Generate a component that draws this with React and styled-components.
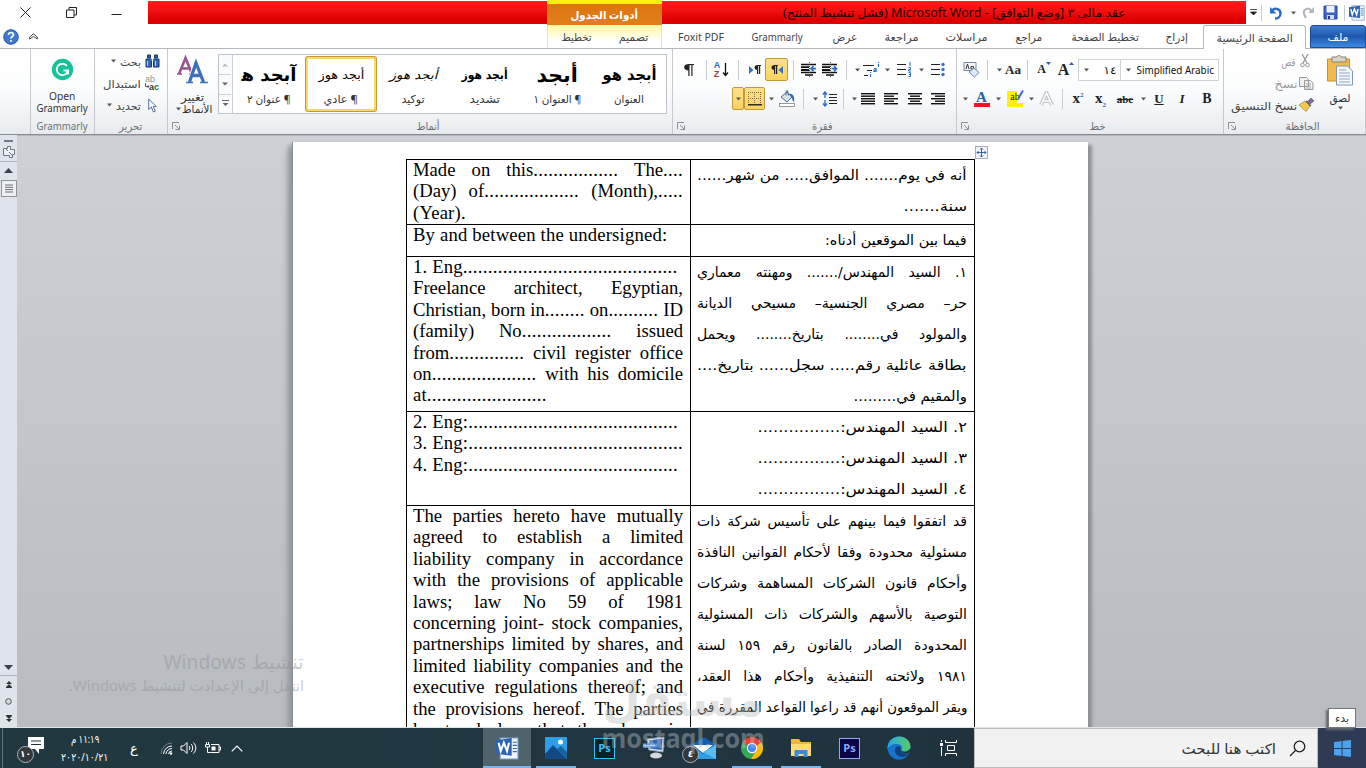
import React, { useLayoutEffect, useRef, useState } from "react";
import styled, { createGlobalStyle } from "styled-components";

const ui = `"Noto Sans", "DejaVu Sans", sans-serif`;

// Squeezes a single line of text into a known width
const FitText = ({ w, children }) => {
  const ref = useRef(null);
  const [scale, setScale] = useState(1);

  useLayoutEffect(() => {
    setScale(w / ref.current.offsetWidth);
  }, [w]);

  return (
    <FitBox $w={w}>
      <FitInner ref={ref} dir="auto" style={{ transform: `scaleX(${scale})` }}>
        {children}
      </FitInner>
    </FitBox>
  );
};

// Dot leaders are set a little wider than the words around them
const Leaders = ({ text, gap }) =>
  text
    .replace("|", "")
    .split(/(\.{3,})/)
    .map((part, i) => (i % 2 ? <Dots key={i} $gap={gap}>{part}</Dots> : part));

const Svg = ({ w = 16, h = 16, children }) => (
  <svg width={w} height={h} viewBox={`0 0 ${w} ${h}`} fill="none">
    {children}
  </svg>
);

const Lines = ({ rows }) => (
  <Svg w={14} h={13}>
    {rows.map(([x, w], i) => (
      <rect key={i} x={x} y={1 + i * 2.5} width={w} height="1.4" fill="#111" />
    ))}
  </Svg>
);

const Arrow = ({ w = 12 }) => (
  <Slot $w={w}>
    <Svg w={5} h={4}>
      <path d="M0 0.5h5L2.5 3.5z" fill="#555" />
    </Svg>
  </Slot>
);

const Launcher = () => (
  <Svg w={8} h={8}>
    <path d="M0.5 7V0.5H7M3 3l4 4M7.5 3.5v4h-4" stroke="#8a8f96" />
  </Svg>
);

const WordIcon = ({ s = 16 }) => (
  <svg width={s} height={s} viewBox="0 0 22 22">
    <path d="M4 1h17v20H4z" fill="#eef4fb" stroke="#7da2cf" />
    <path d="M16 5h4M16 8h4M16 11h4M16 14h4" stroke="#3768ac" />
    <path d="M0 3l15-2v17L0 16z" fill="#2b62b3" />
    <path d="M2.5 5.5l2 8 3-8 3 8 2-8" stroke="#fff" strokeWidth="2" fill="none" />
  </svg>
);

const Pilcrow = () => (
  <Svg w={7} h={9}>
    <path d="M3.5 0H7v1H3.5zM3.5 0v5C-.5 5-.5 0 3.5 0zM3 0h1.2v9H3zM5 0h1.2v9H5z" fill="#222" />
  </Svg>
);

const Bucket = () => (
  <Svg w={17} h={17}>
    <path d="M2 7l6-5 5 5-5 5z" fill="#dbe6f3" stroke="#456996" />
    <path d="M7 5.5V1.5l1.500-1 1 5" stroke="#456996" />
    <path d="M10 4c4-1 6 3 5 8-2-1-1-3-3-5z" fill="#376bb1" />
    <rect x=".5" y="13.5" width="15" height="3" fill="#fff" stroke="#999" />
  </Svg>
);

const Indent = ({ flip }) => (
  <Svg w={17} h={15}>
    <path d="M1 2.5h15M1 10.5h15M5 13h8" stroke="#111" strokeWidth="1.3" />
    <path d="M1 5.2h8M1 8h8" stroke="#111" strokeWidth="1.8" />
    <path d="M9.5 0v15" stroke="#444" strokeDasharray="1 1" />
    {flip ? (
      <path d="M16 6.700H12M13.500 4.200L11 6.700l2.500 2.500" stroke="#2f6fc4" strokeWidth="1.7" />
    ) : (
      <path d="M10.500 6.700h4M13 4.200l2.500 2.500L13 9.200" stroke="#2f6fc4" strokeWidth="1.7" />
    )}
  </Svg>
);

const STYLES = [
  { sample: "آبجد ﻫ", name: "¶ عنوان ٢", size: 18, sw: 55, nw: 44, bold: true },
  { sample: "أبجد هوز", name: "¶ عادي", size: 12, sw: 46, nw: 35, active: true },
  { sample: "أبجد هوز", name: "توكيد", size: 12, sw: 48, nw: 23, italic: true },
  { sample: "أبجد هوز", name: "تشديد", size: 12, sw: 46, nw: 30, bold: true },
  { sample: "أبجد", name: "¶ العنوان ١", size: 20, sw: 41, nw: 48, bold: true },
  { sample: "أبجد هو", name: "العنوان", size: 16, sw: 54, nw: 30, bold: true },
];

const TABS = [
  { w: 78, tw: 46, label: "Foxit PDF" },
  { w: 75, tw: 51, label: "Grammarly" },
  { w: 60, tw: 25, label: "عرض" },
  { w: 54, tw: 34, label: "مراجعة" },
  { w: 76, tw: 42, label: "مراسلات" },
  { w: 48, tw: 27, label: "مراجع" },
  { w: 104, tw: 67, label: "تخطيط الصفحة" },
  { w: 40, tw: 22, label: "إدراج" },
];

// a leading "|" marks a line that is not stretched to the column width
const CLAUSES = [
  {
    h: 65,
    en: [
      "Made on this................. The....",
      "(Day) of................... (Month),.....",
      "|(Year).",
    ],
    ar: ["أنه في يوم....... الموافق..... من شهر......", "|سنة......."],
    arW: [270, 64],
  },
  { h: 32, en: ["|By and between the undersigned:"], ar: ["|فيما بين الموقعين أدناه:"], arW: [142] },
  {
    h: 155,
    en: [
      "|1. Eng...........................................",
      "Freelance architect, Egyptian,",
      "Christian, born in........ on.......... ID",
      "(family) No.................. issued",
      "from............... civil register office",
      "on..................... with his domicile",
      "|at........................",
    ],
    ar: [
      "١. السيد المهندس/....... ومهنته معماري",
      "حر– مصري الجنسية– مسيحي الديانة",
      "والمولود في........ بتاريخ........ ويحمل",
      "بطاقة عائلية رقم..... سجل...... بتاريخ....",
      "|والمقيم في.........",
    ],
    arW: [0, 0, 0, 270, 114],
  },
  {
    h: 94,
    en: [
      "|2. Eng:..........................................",
      "|3. Eng:...........................................",
      "|4. Eng:..........................................",
    ],
    ar: [
      "|٢. السيد المهندس:................",
      "|٣. السيد المهندس:................",
      "|٤. السيد المهندس:................",
    ],
    arW: [209, 209, 209],
  },
  {
    h: 240,
    en: [
      "The parties hereto have mutually",
      "agreed to establish a limited",
      "liability company in accordance",
      "with the provisions of applicable",
      "laws; law No 59 of 1981",
      "concerning joint- stock companies,",
      "partnerships limited by shares, and",
      "limited liability companies and the",
      "executive regulations thereof; and",
      "the provisions hereof. The parties",
      "hereto declare that they have in",
    ],
    ar: [
      "قد اتفقوا فيما بينهم على تأسيس شركة ذات",
      "مسئولية محدودة وفقا لأحكام القوانين النافذة",
      "وأحكام قانون الشركات المساهمة وشركات",
      "التوصية بالأسهم والشركات ذات المسئولية",
      "المحدودة الصادر بالقانون رقم ١٥٩ لسنة",
      "١٩٨١ ولائحته التنفيذية وأحكام هذا العقد،",
      "ويقر الموقعون أنهم قد راعوا القواعد المقررة في",
    ],
    arW: [0, 0, 0, 0, 0, 0, 270],
  },
];

const TitleBar = () => (
  <TitleRow>
    <WindowButtons>
      <Slot $w={50}>
        <Svg w={11} h={11}><path d="M.5.5l10 10M10.5.5l-10 10" stroke="#222" /></Svg>
      </Slot>
      <Slot $w={42}>
        <Svg w={11} h={11}><path d="M.5 3h7.5v7.5H.5zM3 3V.5h7.5V8H8" stroke="#222" /></Svg>
      </Slot>
      <Slot $w={48}>
        <Svg w={11} h={11}><path d="M.5 7.5h10" stroke="#222" /></Svg>
      </Slot>
    </WindowButtons>
    <RedBar $w={399} />
    <ContextHeader>
      <FitText w={68}>أدوات الجدول</FitText>
    </ContextHeader>
    <RedBar $w={584}>
      <TitleText>
        <FitText w={343}>عقد مالي ٣ [وضع التوافق] - Microsoft Word (فشل تنشيط المنتج)</FitText>
      </TitleText>
    </RedBar>
    <Slot $w={15}>
      <Svg w={7} h={7}><path d="M0 .5h7M.5 3h6l-3 3z" stroke="#222" fill="#222" strokeWidth=".8" /></Svg>
    </Slot>
    <Divider $h={16} />
    <Slot $w={28}>
      <Svg w={14} h={14}>
        <path d="M3 4.5C6 1 12 3 11.5 8c-.3 3-3 4.5-5.5 4.5" stroke="#2b6cc8" strokeWidth="2.5" />
        <path d="M1 1v6.5h6.5z" fill="#2b6cc8" />
      </Svg>
    </Slot>
    <Arrow w={6} />
    <Slot $w={24}>
      <Svg w={13} h={13}>
        <path d="M9.5 5C7 1 1 2.5 2 8l2 4" stroke="#b5b9be" strokeWidth="2.2" />
        <path d="M12 1v6H6z" fill="#b5b9be" />
      </Svg>
    </Slot>
    <Slot $w={20}>
      <Svg w={15} h={15}>
        <path d="M1 1h13v13H1z" fill="#3d62c4" stroke="#2a4691" />
        <path d="M3.5 1h8v6.5h-8z" fill="#eef2fb" />
        <path d="M4 10h7v4H4z" fill="#d5dcec" />
        <path d="M5 11h2v3H5z" fill="#223a80" />
      </Svg>
    </Slot>
    <Slot $w={8}><Divider $h={16} /></Slot>
    <Slot $w={18}><WordIcon /></Slot>
  </TitleRow>
);

const TabBar = () => (
  <TabRow>
    <Slot $w={22}>
      <Svg w={16} h={16}>
        <circle cx="8" cy="8" r="7.3" fill="#3f79cf" stroke="#28589f" />
        <path d="M5.5 6c0-3.3 5-3.2 5-.3C10.5 7.6 8 7.5 8 9.5M8 11v1.8" stroke="#fff" strokeWidth="1.7" />
      </Svg>
    </Slot>
    <Slot $w={22}>
      <Svg w={9} h={7}><path d="M.7 4L4.5.8 8.3 4v2L4.5 3.5.7 6z" stroke="#444" /></Svg>
    </Slot>
    <TabSpacer />
    <ContextTabs>
      <Tab $w={57}><FitText w={30}>تخطيط</FitText></Tab>
      <Tab $w={57}><FitText w={30}>تصميم</FitText></Tab>
    </ContextTabs>
    {TABS.map((tab) => (
      <Tab key={tab.label} $w={tab.w}>
        <FitText w={tab.tw}>{tab.label}</FitText>
      </Tab>
    ))}
    <ActiveTab><FitText w={76}>الصفحة الرئيسية</FitText></ActiveTab>
    <FileTab><FitText w={21}>ملف</FitText></FileTab>
  </TabRow>
);

const EditingGroup = () => (
  <Group $w={73}>
    <SmallCommands $pad={4}>
      <Command>
        <Arrow w={14} />
        <FitText w={21}>بحث</FitText>
        <Slot $w={22}>
          <Svg w={15} h={14}>
            <path d="M2.5 1h3v3h-3zM9.5 1h3v3h-3zM1 5h5.5v8H1zM8.5 5H14v8H8.5z" fill="#3767ad" stroke="#17386f" />
            <path d="M6 6h3M2.5 7v5M10.5 7v5" stroke="#b9d0ee" />
          </Svg>
        </Slot>
      </Command>
      <Command>
        <FitText w={38}>استبدال</FitText>
        <Slot $w={22}>
          <ReplaceGlyph>
            <span>ab</span>
            <ReplaceTo>
              <Svg w={4} h={6}><path d="M.5 0v3.500H4M2.500 2L4 3.500 2.500 5" stroke="#333" strokeWidth=".8" /></Svg>
              a<em>c</em>
            </ReplaceTo>
          </ReplaceGlyph>
        </Slot>
      </Command>
      <Command>
        <Arrow w={14} />
        <FitText w={25}>تحديد</FitText>
        <Slot $w={22}>
          <Svg w={9} h={15}><path d="M.7 1v10.5L3.3 9l2.2 5 1.8-.8L5.2 8.5h3z" fill="#fff" stroke="#53709b" /></Svg>
        </Slot>
      </Command>
    </SmallCommands>
    <GroupLabel><FitText w={23}>تحرير</FitText></GroupLabel>
  </Group>
);

const StylesGroup = () => (
  <Group $w={505}>
    <StylesBody>
      <BigButton $w={50}>
        <Svg w={32} h={30}>
          <path d="M2 19L8.500 3 15 19M5 13.500h7" stroke="#9a5590" strokeWidth="2.600" />
          <path d="M0 19h5M12 19h5" stroke="#9a5590" strokeWidth="1.500" />
          <path d="M12.500 27L19 8 26.500 27M15 20.500h9" stroke="#fff" strokeWidth="5" />
          <path d="M12.500 27L19 8 26.500 27M15 20.500h9" stroke="#3d72ba" strokeWidth="3.300" />
          <path d="M9 27.500h7M23 27.500h8" stroke="#3d72ba" strokeWidth="1.500" />
        </Svg>
        <FitText w={23}>تغيير</FitText>
        <Inline><Arrow w={8} /><FitText w={30}>الأنماط</FitText></Inline>
      </BigButton>
      <Gallery>
        <GalleryScroll>
          <Slot $w={12}><Svg w={6} h={4}><path d="M0 3.5h6L3 .5z" fill="#b8bcc2" /></Svg></Slot>
          <Slot $w={12}><Svg w={6} h={4}><path d="M0 .5h6L3 3.5z" fill="#666" /></Svg></Slot>
          <Slot $w={12}><Svg w={7} h={7}><path d="M0 .5h7" stroke="#666" /><path d="M.5 3h6l-3 3z" fill="#666" /></Svg></Slot>
        </GalleryScroll>
        {STYLES.map((s) => (
          <StyleCard key={s.name} $active={s.active}>
            <StyleSample $size={s.size} $bold={s.bold} $italic={s.italic}>
              <FitText w={s.sw}>{s.sample}</FitText>
            </StyleSample>
            <FitText w={s.nw}>{s.name}</FitText>
          </StyleCard>
        ))}
      </Gallery>
    </StylesBody>
    <GroupLabel $launcher><Launcher /><FitText w={23}>أنماط</FitText></GroupLabel>
  </Group>
);

const ParagraphGroup = () => (
  <Group $w={284}>
    <ToolRow $indent={4}>
      <Slot $w={24}>
        <Svg w={10} h={12}>
          <path d="M4.500 0H10v1H4.500zM5 0v6.500C-1.500 6.500-1.500 0 5 0zM4.300 0h1.200v12H4.300zM7.300 0h1.200v12H7.300z" fill="#222" />
        </Svg>
      </Slot>
      <Slot $w={10}><Divider $h={20} /></Slot>
      <Slot $w={21}>
        <SortGlyph><span>A</span><span>Z</span></SortGlyph>
        <Svg w={7} h={14}><path d="M3.5 0v12M1 9.5l2.5 3 2.5-3" stroke="#111" strokeWidth="1.3" /></Svg>
      </Slot>
      <Slot $w={12}><Divider $h={20} /></Slot>
      <Slot $w={21}>
        <Svg w={5} h={8}><path d="M0 0v8l4.5-4z" fill="#3373c4" /></Svg><Pilcrow />
      </Slot>
      <Hot $w={23}>
        <Pilcrow /><Svg w={5} h={8}><path d="M5 0v8L.5 4z" fill="#3373c4" /></Svg>
      </Hot>
      <Slot $w={10}><Divider $h={20} /></Slot>
      <Slot $w={20}><Indent flip /></Slot>
      <Slot $w={22}><Indent /></Slot>
      <Slot $w={12}><Divider $h={20} /></Slot>
      <Arrow w={10} />
      <Slot $w={18}>
        <Svg w={17} h={15}>
          <path d="M0 3.500h11M4 8.500h5M1 13.500h4" stroke="#222" strokeWidth="1.200" />
          <path d="M15.500 0v1M15.500 2v3M11 6.500h2v3h-2v-1.500h2M7.500 10v1M7.500 12v3" stroke="#2f6fc4" strokeWidth="1.200" />
        </Svg>
      </Slot>
      <Arrow w={14} />
      <Slot $w={20}>
        <Svg w={15} h={15}>
          <path d="M0 2.5h9M0 7.5h9M0 12.5h9" stroke="#222" strokeWidth="1.2" />
          <path d="M13 0v4M11.500 5.500h2v2h-2v1.500h2.500M11.500 10.500h2v4h-2M12 12.500h1.500" stroke="#2f6fc4" />
        </Svg>
      </Slot>
      <Arrow w={15} />
      <Slot $w={18}>
        <Svg w={14} h={15}>
          <path d="M0 2.5h9M0 7.5h9M0 12.5h9" stroke="#222" strokeWidth="1.2" />
          <circle cx="12" cy="2.500" r="1.700" fill="#3973c0" />
          <circle cx="12" cy="7.500" r="1.700" fill="#3973c0" />
          <circle cx="12" cy="12.500" r="1.700" fill="#3973c0" />
        </Svg>
      </Slot>
    </ToolRow>
    <ToolRow $indent={59}>
      <Hot $w={12}><Arrow w={10} /></Hot>
      <Hot $w={21}>
        <Svg w={14} h={14}>
          <path d="M.5 0v13M6.5 0v13M12.5 0v13M0 .5h13M0 6.5h13" stroke="#806b38" strokeDasharray="1 1" />
          <path d="M0 12.8h14" stroke="#111" strokeWidth="1.3" />
        </Svg>
      </Hot>
      <Arrow w={12} />
      <Slot $w={20}><Bucket /></Slot>
      <Slot $w={12}><Divider $h={20} /></Slot>
      <Arrow w={12} />
      <Slot $w={16}>
        <Svg w={15} h={16}>
          <path d="M7 3.500h8M7 6.500h8M7 9.500h8M7 12.500h8" stroke="#222" />
          <path d="M3 1v6M1 3.500l2-2.500 2 2.500M3 9v6M1 12.500L3 15l2-2.500" stroke="#2f6fc4" strokeWidth="1.400" />
        </Svg>
      </Slot>
      <Slot $w={13}><Divider $h={20} /></Slot>
      <Arrow w={9} />
      <Slot $w={17}><Lines rows={[[0, 14], [0, 14], [0, 14], [0, 14], [0, 14]]} /></Slot>
      <Slot $w={29}><Lines rows={[[0, 14], [0, 10], [0, 14], [0, 10], [0, 14]]} /></Slot>
      <Slot $w={19}><Lines rows={[[0, 14], [2, 10], [0, 14], [2, 10], [0, 14]]} /></Slot>
      <Slot $w={28}><Lines rows={[[0, 14], [4, 10], [0, 14], [4, 10], [0, 14]]} /></Slot>
    </ToolRow>
    <GroupLabel $launcher><Launcher /><FitText w={21}>فقرة</FitText></GroupLabel>
  </Group>
);

const FontGroup = () => (
  <Group $w={267}>
    <ToolRow $indent={4}>
      <Slot $w={20}>
        <Svg w={17} h={16}>
          <path d="M1 .5h12v8H1z" fill="#f4f8fd" stroke="#7286a3" />
          <path d="M3 7l1.5-5L6 7M8 4.5h2.5v2.5H8z" stroke="#333" />
          <path d="M6 10l5-4 5 4.5-4.5 4.5z" fill="#dfe9f6" stroke="#6d8ab3" />
        </Svg>
      </Slot>
      <Slot $w={12}><Divider $h={20} /></Slot>
      <Arrow w={12} />
      <Slot $w={16}><Glyph $size={13} $bold>Aa</Glyph></Slot>
      <Slot $w={13}><Divider $h={20} /></Slot>
      <Slot $w={20}>
        <Glyph $size={12} $bold>A</Glyph>
        <Raised><Svg w={5} h={3}><path d="M0 0h5L2.5 3z" fill="#2f5fa8" /></Svg></Raised>
      </Slot>
      <Slot $w={24}>
        <Glyph $size={16} $bold>A</Glyph>
        <Raised><Svg w={5} h={3}><path d="M0 3h5L2.5 0z" fill="#2f5fa8" /></Svg></Raised>
      </Slot>
      <Combo $w={43}><Arrow w={14} /><FitText w={13}>١٤</FitText></Combo>
      <Combo $w={98}><Arrow w={14} /><FitText w={77}>Simplified Arabic</FitText></Combo>
    </ToolRow>
    <ToolRow $indent={2}>
      <Arrow />
      <Slot $w={21}><Underscored $c="#f0141e" $text="#2f5fa8">A</Underscored></Slot>
      <Arrow />
      <Slot $w={22}>
        <Underscored $c="#fff200" $text="#111" $mark>ab</Underscored>
        <Pen><Svg w={8} h={11}><path d="M7 0.5L2 9" stroke="#3e6fb4" strokeWidth="2" /></Svg></Pen>
      </Slot>
      <Arrow w={11} />
      <Slot $w={19}>
        <Svg w={15} h={15}>
          <path d="M2 14L7.5 2 13 14M4.5 10h6" stroke="#c4c7cb" strokeWidth="4" />
          <path d="M2 14L7.5 2 13 14M4.5 10h6" stroke="#fff" strokeWidth="1.4" />
        </Svg>
      </Slot>
      <Slot $w={12}><Divider $h={20} /></Slot>
      <Slot $w={20}><Glyph $size={15} $bold>x<sup>2</sup></Glyph></Slot>
      <Slot $w={25}><Glyph $size={15} $bold>x<sub>2</sub></Glyph></Slot>
      <Slot $w={24}><Glyph $size={11} $bold $line="line-through">abc</Glyph></Slot>
      <Arrow />
      <Slot $w={20}><Glyph $size={13} $bold $line="underline">U</Glyph></Slot>
      <Slot $w={26}><Glyph $size={13} $bold $italic>I</Glyph></Slot>
      <Slot $w={24}><Glyph $size={14} $bold>B</Glyph></Slot>
    </ToolRow>
    <GroupLabel $launcher><Launcher /><FitText w={16}>خط</FitText></GroupLabel>
  </Group>
);

const ClipboardGroup = () => (
  <Group $w={142}>
    <ClipboardBody>
      <SmallCommands>
        <Command $muted>
          <FitText w={14}>قص</FitText>
          <Slot $w={20}>
            <Svg w={10} h={14}>
              <path d="M2 0l5 9M8 0L3 9" stroke="#999" strokeWidth="1.3" />
              <circle cx="2.5" cy="11" r="1.8" stroke="#999" /><circle cx="7.5" cy="11" r="1.8" stroke="#999" />
            </Svg>
          </Slot>
        </Command>
        <Command $muted>
          <FitText w={23}>نسخ</FitText>
          <Slot $w={18}>
            <Svg w={15} h={13}>
              <path d="M.5.5h7l2 2v7h-9zM5.5 3.5h6l2.5 2.5v6.5H5.5z" fill="#f2f2f2" stroke="#999" />
              <path d="M7 7h5M7 9h5M7 11h5" stroke="#aaa" />
            </Svg>
          </Slot>
        </Command>
        <Command>
          <FitText w={66}>نسخ التنسيق</FitText>
          <Slot $w={18}>
            <Svg w={16} h={14}>
              <path d="M9 4l4-4 3 3-4 3z" fill="#8b6ca0" stroke="#574270" strokeWidth=".6" />
              <path d="M1 7l6-4 5 5-4 5.5z" fill="#f1ca55" stroke="#a57f2a" strokeWidth=".7" />
              <path d="M8 3l5 5" stroke="#666" strokeWidth="1.5" />
            </Svg>
          </Slot>
        </Command>
      </SmallCommands>
      <BigButton $w={50}>
        <Svg w={28} h={31}>
          <path d="M1.5 4h22v22h-22z" fill="#f3b94b" stroke="#c98f2e" />
          <path d="M6 2h5c0-2 4-2 4 0h5v5H6z" fill="#d9d4c8" stroke="#8a8272" />
          <path d="M10.5 11h11l5 5v14h-16z" fill="#f4f8fd" stroke="#8096b5" />
          <path d="M13 15h7M13 18h11M13 21h11M13 24h11M13 27h11" stroke="#8fa6c8" />
        </Svg>
        <FitText w={21}>لصق</FitText>
        <Arrow />
      </BigButton>
    </ClipboardBody>
    <GroupLabel $launcher><Launcher /><FitText w={34}>الحافظة</FitText></GroupLabel>
  </Group>
);

const Ribbon = () => (
  <RibbonRow>
    <Group $w={31} />
    <Group $w={64}>
      <BigButton $w={62} $pad={3} $gap={8}>
        <Svg w={23} h={24}>
          <circle cx="11.5" cy="11.5" r="10.7" fill="#15c39a" />
          <path d="M16 8a5.7 5.7 0 1 0 1 4.5M12.5 12.5H17v4" stroke="#fff" strokeWidth="1.9" />
        </Svg>
        <FitText w={26}>Open</FitText>
        <FitText w={51}>Grammarly</FitText>
      </BigButton>
      <GroupLabel><FitText w={51}>Grammarly</FitText></GroupLabel>
    </Group>
    <EditingGroup />
    <StylesGroup />
    <ParagraphGroup />
    <FontGroup />
    <ClipboardGroup />
  </RibbonRow>
);

const ScrollBar = () => (
  <ScrollTrack>
    <ScrollTop>
      <SplitHandle />
      <Svg w={12} h={12}>
        <path d="M.5 2.5h4v-2h3v3h4v5h-2v3h-3v-2h-6z" fill="#eef0f3" stroke="#6c7880" />
        <path d="M3 3l2 2M6 6l3 3" stroke="#6c7880" />
      </Svg>
    </ScrollTop>
    <ScrollArrow><Svg w={9} h={5}><path d="M0 5h9L4.5 0z" fill="#3c4148" /></Svg></ScrollArrow>
    <ScrollThumb><Svg w={8} h={9}><path d="M0 1h8M0 3.3h8M0 5.6h8M0 8h8" stroke="#6b7076" /></Svg></ScrollThumb>
    <ScrollGap />
    <ScrollArrow><Svg w={9} h={5}><path d="M0 0h9L4.5 5z" fill="#3c4148" /></Svg></ScrollArrow>
    <ScrollNav>
      <Svg w={6} h={7}><path d="M0 3h6L3 0zM0 6h6L3 3zM0 6h6v1H0z" fill="#333" /></Svg>
      <Svg w={7} h={7}><circle cx="3.5" cy="3.5" r="2.8" fill="#d5d8de" stroke="#555" /></Svg>
      <Svg w={6} h={7}><path d="M0 1h6L3 4zM0 4h6L3 7zM0 0h6v1H0z" fill="#333" /></Svg>
    </ScrollNav>
  </ScrollTrack>
);

const DocumentArea = () => (
  <Workspace>
    <ScrollBar />
    <Desk>
      <Page>
        <MoveHandle>
          <Svg w={11} h={11}>
            <path d="M5.5 1v9M1 5.5h9M4 2.5L5.5 1 7 2.5M4 8.5L5.5 10 7 8.5M2.5 4L1 5.5 2.5 7M8.5 4L10 5.5 8.5 7" stroke="#3a63a8" />
          </Svg>
        </MoveHandle>
        <Contract>
          {CLAUSES.map((row) => (
            <Clause key={row.h} $h={row.h}>
              <Cell>
                {row.en.map((line) => (
                  <EnLine key={line} $loose={line[0] === "|"}>
                    <Leaders text={line} gap={0.33} />
                  </EnLine>
                ))}
              </Cell>
              <Cell dir="rtl">
                {row.ar.map((line, i) => (
                  <ArLine key={line} $loose={line[0] === "|"}>
                    {row.arW[i] ? (
                      <FitText w={row.arW[i]}><Leaders text={line} gap={1.4} /></FitText>
                    ) : (
                      <Leaders text={line} gap={1.4} />
                    )}
                  </ArLine>
                ))}
              </Cell>
            </Clause>
          ))}
        </Contract>
      </Page>
    </Desk>
    <ActivationNote>
      <NoteLine $size={20}><FitText w={140}>تنشيط Windows</FitText></NoteLine>
      <NoteLine $size={14}><FitText w={235}>انتقل إلى الإعدادت لتنشيط Windows.</FitText></NoteLine>
    </ActivationNote>
  </Workspace>
);

const Taskbar = () => (
  <Bar>
    <Slot $w={5}><Divider $h={40} $c="#5d7078" /></Slot>
    <Slot $w={54}>
      <Svg w={30} h={26}>
        <path d="M11 2h16v12h-5v5l-4-5h-7z" fill="#fff" />
        <path d="M14 6h10M14 9.5h10" stroke="#20363f" strokeWidth="1.2" />
      </Svg>
      <CountBadge $left={12} $top={18}>١٠</CountBadge>
    </Slot>
    <Clock>
      <FitText w={28}>١١:١٩ م</FitText>
      <FitText w={47}>٢٠٢٠/١٠/٢١</FitText>
    </Clock>
    <Slot $w={46}><Lang>ع</Lang></Slot>
    <Slot $w={18}>
      <Svg w={13} h={13}>
        <path d="M1 12A11 11 0 0 1 12 1" stroke="#718087" />
        <path d="M3.5 12A8.5 8.5 0 0 1 12 4M6 12a6 6 0 0 1 6-5.5M8.5 12A3.5 3.5 0 0 1 12 9" stroke="#fff" />
        <circle cx="11" cy="11.5" r="1.3" fill="#fff" />
      </Svg>
    </Slot>
    <Slot $w={26}>
      <Svg w={17} h={14}>
        <path d="M1 5h2.5L7 1.5v11L3.5 9H1zM9 5c1.2 1 1.2 3 0 4M11 3c2.3 2 2.3 6 0 8M13.5 1.5c3 3 3 8 0 11" stroke="#fff" />
      </Svg>
    </Slot>
    <Slot $w={24}>
      <Svg w={16} h={12}>
        <path d="M6 2.500h8v8H5.500M14 5h1.500v3H14" stroke="#fff" />
        <path d="M6.5 4.5h4v4h-4z" fill="#fff" />
        <path d="M1.500 0v2.500M3.500 0v2.500M.5 2.500h4v2.500h-4zM2.500 5v5.500h3" stroke="#fff" />
      </Svg>
    </Slot>
    <Slot $w={24}><Svg w={12} h={7}><path d="M.7 6.3L6 1l5.3 5.3" stroke="#fff" strokeWidth="1.2" /></Svg></Slot>
    <BarSpacer />
    <TaskSlot $w={48} $active $line={48}><WordIcon s={23} /></TaskSlot>
    <TaskSlot $w={49} $line={40}>
      <Svg w={22} h={22}>
        <path d="M0 0h22v22H0z" fill="#2d9fe8" />
        <path d="M0 17L8 8l14 14H0z" fill="#124a86" />
        <path d="M12 12l4-3 6 6v7z" fill="#19639f" />
        <circle cx="15.5" cy="5" r="2.5" fill="#fff" />
      </Svg>
    </TaskSlot>
    <TaskSlot $w={49}><PsTile $c="#2fc2f2" $bg="#08202d">Ps</PsTile></TaskSlot>
    <TaskSlot $w={49}>
      <Svg w={24} h={24}>
        <path d="M5 3l17-2-1 15-14-2z" fill="#dfe6ee" stroke="#8fa0b5" />
        <path d="M7 4.500l13.500-2-.8 11.500L8 12.500z" fill="#2f67b7" />
        <path d="M1 7.500h14v4H1z" fill="#5b9bea" />
        <path d="M2 9.500h12" stroke="#dceafc" strokeDasharray="2 1" />
        <ellipse cx="14" cy="19.500" rx="6" ry="3" fill="#d4d9de" />
      </Svg>
    </TaskSlot>
    <TaskSlot $w={49}>
      <Svg w={26} h={22}>
        <path d="M1 8L14 0l12 8v14H1z" fill="#0f5fb5" />
        <path d="M3 8h20L13 16z" fill="#fff" />
        <path d="M1 8l12 9 13-9v14H1z" fill="#2d9fe8" />
        <path d="M13 15l13 7V8z" fill="#56bdf5" />
      </Svg>
      <CountBadge $left={4} $top={18}>٤</CountBadge>
    </TaskSlot>
    <TaskSlot $w={49} $line={40}>
      <Svg w={22} h={22}>
        <path d="M11 11L1.5 5.5A11 11 0 0 1 20.5 5.5z" fill="#ea4335" />
        <path d="M11 11L1.5 5.5A11 11 0 0 0 10 22l5-8.5z" fill="#34a853" />
        <path d="M11 11l9.5-5.5A11 11 0 0 1 10 22l5-8.5z" fill="#fbbc05" />
        <circle cx="11" cy="11" r="5.2" fill="#fff" /><circle cx="11" cy="11" r="4" fill="#4285f4" />
      </Svg>
    </TaskSlot>
    <TaskSlot $w={49} $line={40}>
      <Svg w={22} h={20}>
        <path d="M1 1h8l2 3h10v14H1z" fill="#f3b73e" />
        <path d="M1 6h20v12H1z" fill="#ffdb76" />
        <path d="M4.5 19v-7h13v7h-4v-3h-5v3z" fill="#3b8bd8" />
      </Svg>
    </TaskSlot>
    <TaskSlot $w={49}><PsTile $c="#8fa9ff" $bg="#0b0547">Ps</PsTile></TaskSlot>
    <TaskSlot $w={49}>
      <Svg w={24} h={24}>
        <defs>
          <linearGradient id="edge" x1="0" y1="0" x2="1" y2="0">
            <stop stopColor="#24a6e8" /><stop offset="1" stopColor="#55ce62" />
          </linearGradient>
        </defs>
        <circle cx="12" cy="12" r="11.5" fill="#1672ca" />
        <path d="M.6 11C2-3 23-3 23.5 11c0 5-8 6-9 3 2-3-1-6-5-6S2 10 .6 13z" fill="url(#edge)" />
        <path d="M9 11c-3 5 1 10 7 10 2 0 4-1 6-3-4 1-8-1-8-4l-1-4z" fill="#11417f" />
        <path d="M14 14c1 3 9 2 9.5-3l-.5 5c-2 2-7 3-9-2z" fill="#20363f" />
      </Svg>
    </TaskSlot>
    <TaskSlot $w={51}>
      <Svg w={17} h={17}>
        <path d="M5.500 2.500h11M5.500 13.500h11M7.500 5.500h7v5h-7zM5.500 0v2.500M16.500 0v2.500M5.500 13.500V16M16.500 13.500V16M1.500 0v2M1.500 7v9" stroke="#fff" />
        <path d="M0 3h3v3H0z" fill="#fff" />
      </Svg>
    </TaskSlot>
    <SearchBox>
      <FitText w={95}>اكتب هنا للبحث</FitText>
      <Svg w={17} h={17}><circle cx="10.5" cy="6.5" r="5.3" stroke="#222" strokeWidth="1.3" /><path d="M6.5 10.5L1 16" stroke="#222" strokeWidth="1.3" /></Svg>
    </SearchBox>
    <StartButton $w={48}>
      <Svg w={17} h={17}><path d="M0 2.3L7.5 1v7H0zM8.5.9L17 0v8H8.5zM0 9h7.5v7L0 15zM8.5 9H17v8l-8.5-1z" fill="#4ba3ee" /></Svg>
      <StartTip><FitText w={14}>بدء</FitText></StartTip>
    </StartButton>
  </Bar>
);

export default function App() {
  return (
    <Screen>
      <GlobalStyle />
      <TitleBar />
      <TabBar />
      <Ribbon />
      <DocumentArea />
      <Taskbar />
      <Watermark>
        <MarkLogo><FitText w={162}>مستقل</FitText></MarkLogo>
        <MarkUrl><FitText w={163}>mostaql.com</FitText></MarkUrl>
      </Watermark>
    </Screen>
  );
}

const GlobalStyle = createGlobalStyle`
  * { box-sizing: border-box; }
  body { margin: 0; overflow: hidden; }
  svg { display: block; flex: none; }
`;

const Screen = styled.div`
  position: relative;
  width: 1366px;
  height: 768px;
  display: flex;
  flex-direction: column;
  overflow: hidden;
  background: #fff;
  color: #333;
  font-family: ${ui};
  font-size: 11px;
`;

const FitBox = styled.span`
  display: inline-flex;
  justify-content: center;
  flex: none;
  width: ${(p) => p.$w}px;
  white-space: nowrap;
`;

const FitInner = styled.span`
  flex: none;
`;

const Dots = styled.span`
  letter-spacing: ${(p) => p.$gap}px;
`;

const Slot = styled.div`
  position: relative;
  display: flex;
  align-items: center;
  justify-content: center;
  flex: none;
  width: ${(p) => p.$w}px;
  height: 100%;
`;

const Divider = styled.div`
  flex: none;
  width: 1px;
  height: ${(p) => p.$h}px;
  background: ${(p) => p.$c || "#c9cdd2"};
`;

const TitleRow = styled.header`
  display: flex;
  align-items: center;
  height: 25px;
  flex: none;
`;

const WindowButtons = styled.div`
  display: flex;
  width: 148px;
  height: 28px;
`;

const RedBar = styled.div`
  width: ${(p) => p.$w}px;
  height: 23px;
  background: linear-gradient(#ff1c1c, #f01010 45%, #dc0000 80%);
`;

const TitleText = styled.div`
  padding-left: 121px;
  color: #2b0000;
  font-size: 12px;
  line-height: 24px;
`;

const ContextHeader = styled.div`
  width: 115px;
  height: 25px;
  padding-top: 2px;
  border-top: 4px solid #ffee14;
  background: linear-gradient(#dd7410, #e08018);
  color: #fff;
  font-weight: 700;
  line-height: 17px;
  text-align: center;
`;

const TabRow = styled.nav`
  display: flex;
  align-items: center;
  height: 24px;
  flex: none;
  color: #444;
  border-bottom: 1px solid #b2b8be;
`;

const TabSpacer = styled.div`
  width: 503px;
`;

const Tab = styled.div`
  width: ${(p) => p.$w}px;
  flex: none;
  text-align: center;
  line-height: 23px;
`;

const ContextTabs = styled.div`
  display: flex;
  width: 115px;
  height: 23px;
  border: solid #eee5a5;
  border-width: 0 1px;
  background: linear-gradient(#fffa9f, #fff 70%);
`;

const ActiveTab = styled.div`
  width: 103px;
  height: 24px;
  margin-left: 6px;
  margin-bottom: -1px;
  border: 1px solid #b2b8be;
  border-bottom: 0;
  border-radius: 3px 3px 0 0;
  background: #fff;
  line-height: 23px;
  text-align: center;
`;

const FileTab = styled.div`
  width: 56px;
  height: 23px;
  margin-left: 4px;
  border: 1px solid #1c4d96;
  border-radius: 3px 3px 0 0;
  background: linear-gradient(#3f80d4, #1e56ac 50%, #3b8be0);
  color: #fff;
  line-height: 22px;
  text-align: center;
`;

const RibbonRow = styled.section`
  position: relative;
  display: flex;
  height: 86px;
  flex: none;
  border-bottom: 1px solid #868b92;
  background: linear-gradient(#fff, #fbfcfd 50%, #e8ebee);
`;

const Group = styled.div`
  display: flex;
  flex-direction: column;
  width: ${(p) => p.$w}px;
  flex: none;
  padding-top: 6px;
  border-right: 1px solid #c6cad0;
`;

const GroupLabel = styled.div`
  display: grid;
  grid-template-columns: ${(p) => (p.$launcher ? "16px 1fr" : "1fr")};
  align-items: center;
  justify-items: center;
  height: 17px;
  margin-top: auto;
  color: #6b7178;
  line-height: 14px;
`;

const Command = styled.div`
  display: flex;
  align-items: center;
  justify-content: flex-end;
  height: 22px;
  color: ${(p) => (p.$muted ? "#9a9a9a" : "#444")};
`;

const SmallCommands = styled.div`
  margin-top: -5px;
  padding-right: ${(p) => p.$pad || 0}px;
`;

const ReplaceGlyph = styled.div`
  display: flex;
  flex-direction: column;
  color: #999;
  font: 9px/8px "Liberation Sans", sans-serif;
`;

const ReplaceTo = styled.b`
  display: flex;
  color: #333;
  em { color: #1f7a36; font-style: normal; }
`;

const BigButton = styled.div`
  display: flex;
  flex-direction: column;
  align-items: center;
  width: ${(p) => p.$w}px;
  height: 62px;
  padding-top: ${(p) => p.$pad || 0}px;
  color: #333;
  line-height: 12px;
  & > svg { margin-bottom: ${(p) => p.$gap || 6}px; }
  & > ${Slot} { height: 8px; }
`;

const Inline = styled.div`
  display: flex;
`;

const StylesBody = styled.div`
  display: flex;
`;

const Gallery = styled.div`
  display: flex;
  width: 449px;
  height: 60px;
  margin-top: -1px;
  border: 1px solid #c0c5cb;
  background: #fff;
`;

const GalleryScroll = styled.div`
  display: grid;
  grid-template-rows: repeat(3, 1fr);
  width: 14px;
  flex: none;
  border-right: 1px solid #ccd0d5;
  background: #fafbfc;
  & > div + div { border-top: 1px solid #ccd0d5; }
`;

const StyleCard = styled.div`
  display: flex;
  flex-direction: column;
  align-items: center;
  width: 72px;
  flex: none;
  margin: 1px 0;
  border: 3px solid ${(p) => (p.$active ? "#fbd764" : "transparent")};
  outline: ${(p) => (p.$active ? "1px solid #c29a3c" : "none")};
  outline-offset: -1px;
  border-radius: 3px;
`;

const StyleSample = styled.div`
  height: 32px;
  color: #000;
  font: ${(p) => (p.$italic ? "italic" : "normal")} ${(p) => (p.$bold ? 700 : 400)} ${(p) => p.$size}px/32px "DejaVu Sans", sans-serif;
`;

const ToolRow = styled.div`
  display: flex;
  align-items: center;
  height: 29px;
  padding-left: ${(p) => p.$indent}px;
`;

const Hot = styled(Slot)`
  height: 23px;
  border: 1px solid #c29a3c;
  border-radius: 2px;
  background: linear-gradient(#fde08b, #fbd45e);
`;

const Glyph = styled.span`
  color: #222;
  font-family: "Liberation Serif", serif;
  font-size: ${(p) => p.$size}px;
  font-weight: ${(p) => (p.$bold ? 700 : 400)};
  font-style: ${(p) => (p.$italic ? "italic" : "normal")};
  text-decoration: ${(p) => p.$line || "none"};
  sup, sub { color: #2f5fa8; font-size: 7px; line-height: 0; }
`;

const SortGlyph = styled.span`
  display: flex;
  flex-direction: column;
  margin-right: 2px;
  color: #3a68ae;
  font: bold 9px/9px "Liberation Sans", sans-serif;
  span + span { color: #9d3b46; }
`;

const Raised = styled.span`
  align-self: flex-start;
  margin-top: 7px;
`;

const Combo = styled.div`
  display: flex;
  align-items: center;
  justify-content: space-between;
  width: ${(p) => p.$w}px;
  height: 22px;
  padding-right: 4px;
  border: 1px solid #cfd3d8;
  background: #fff;
  color: #111;
  & + & { border-left: 0; }
`;

const Underscored = styled.span`
  width: 16px;
  height: 16px;
  border-bottom: 4px solid ${(p) => p.$c};
  background: ${(p) => (p.$mark ? "linear-gradient(90deg, #fff200 60%, transparent 60%)" : "none")};
  color: ${(p) => p.$text};
  font: ${(p) => (p.$mark ? "10px/11px" : "bold 15px/12px")} "Liberation Serif", serif;
  text-align: center;
`;

const Pen = styled.span`
  position: absolute;
  right: 2px;
  top: 6px;
`;

const ClipboardBody = styled.div`
  display: flex;
  justify-content: flex-end;
`;

const Workspace = styled.main`
  position: relative;
  display: flex;
  height: 592px;
  flex: none;
  overflow: hidden;
`;

const ScrollTrack = styled.aside`
  display: flex;
  flex-direction: column;
  align-items: center;
  width: 17px;
  flex: none;
  background: #dfe3ea;
`;

const ScrollTop = styled.div`
  display: flex;
  flex-direction: column;
  align-items: center;
  gap: 4px;
  width: 17px;
  height: 27px;
  padding-top: 5px;
  border-bottom: 1px solid #aeb3ba;
`;

const SplitHandle = styled.div`
  width: 9px;
  height: 2px;
  background: #737c80;
`;

const ScrollArrow = styled.div`
  display: flex;
  align-items: center;
  height: 16px;
`;

const ScrollThumb = styled.div`
  display: flex;
  align-items: center;
  justify-content: center;
  width: 16px;
  height: 17px;
  margin-top: 2px;
  border: 1px solid #8f949c;
  background: #eff0f3;
`;

const ScrollGap = styled.div`
  flex: 1;
`;

const ScrollNav = styled.div`
  display: flex;
  flex-direction: column;
  align-items: center;
  justify-content: space-around;
  width: 17px;
  height: 52px;
  border-top: 1px solid #aeb3ba;
`;

const Desk = styled.div`
  flex: 1;
  padding: 7px 0 0 276px;
  border-top: 1px solid #b4b8be;
  background: linear-gradient(#cdd0d5, #b8bbc0);
`;

const Page = styled.article`
  width: 795px;
  height: 600px;
  margin-top: -1px;
  padding: 17px 0 0 113px;
  background: #fff;
  box-shadow: -1px 0 0 #8b8f94, -4px 3px 4px #94989d, -8px 6px 6px -2px #a7abb0, 4px 3px 3px #8e9297;
`;

const MoveHandle = styled.div`
  position: absolute;
  left: 975px;
  top: 11px;
  width: 13px;
  height: 13px;
  border: 1px solid #aaadb2;
  background: #f0f3f7;
`;

const Contract = styled.div`
  width: 569px;
  border: 1px solid #000;
`;

const Clause = styled.div`
  display: grid;
  grid-template-columns: 284px 283px;
  height: ${(p) => p.$h}px;
  & + & { border-top: 1px solid #000; }
  &:first-child { height: 64px; }
`;

const Cell = styled.div`
  margin-top: -1px;
  padding: 0 7px 0 6px;
  &:first-child { border-right: 1px solid #000; }
  &:last-child { padding-top: 1px; }
`;

const EnLine = styled.div`
  height: 21.4px;
  color: #000;
  font: 18.67px/21.4px "Liberation Serif", serif;
  letter-spacing: ${(p) => (p.$loose ? "0.18px" : "0")};
  white-space: nowrap;
  text-align-last: ${(p) => (p.$loose ? "left" : "justify")};
`;

const ArLine = styled.div`
  height: 31px;
  color: #000;
  font: 14px/31px "DejaVu Sans", sans-serif;
  white-space: nowrap;
  text-align-last: ${(p) => (p.$loose ? "right" : "justify")};
`;

const ActivationNote = styled.div`
  position: absolute;
  left: 60px;
  top: 514px;
  width: 244px;
  text-align: right;
`;

const NoteLine = styled.div`
  height: 24px;
  color: rgba(140, 144, 149, 0.45);
  font: ${(p) => p.$size}px/26px ${ui};
`;

const Bar = styled.footer`
  display: flex;
  height: 41px;
  flex: none;
  border-top: 1px solid #dfe3e6;
  background: linear-gradient(90deg, #223840, #20353f 50%, #1b303d);
`;

const CountBadge = styled.span`
  position: absolute;
  left: ${(p) => p.$left}px;
  top: ${(p) => p.$top}px;
  width: 17px;
  height: 17px;
  border: 1px solid #aab1b5;
  border-radius: 50%;
  background: #34383c;
  color: #fff;
  font: bold 9px/15px "DejaVu Sans", sans-serif;
  text-align: center;
`;

const Clock = styled.div`
  display: flex;
  flex-direction: column;
  align-items: center;
  width: 52px;
  padding-top: 2px;
  color: #fff;
  line-height: 18px;
`;

const Lang = styled.span`
  color: #fff;
  font-size: 13px;
`;

const BarSpacer = styled.div`
  flex: 1;
`;

const TaskSlot = styled(Slot)`
  background: ${(p) => (p.$active ? "#50626a" : "none")};
  &::after {
    content: "";
    position: absolute;
    left: calc(50% - ${(p) => (p.$line || 0) / 2}px);
    bottom: 0;
    width: ${(p) => p.$line || 0}px;
    height: 2px;
    background: #76b5ef;
  }
`;

const PsTile = styled.div`
  width: 21px;
  height: 21px;
  border: 1.5px solid ${(p) => p.$c};
  background: ${(p) => p.$bg};
  color: ${(p) => p.$c};
  font: bold 11px/18px "Open Sans", sans-serif;
  text-align: center;
`;

const SearchBox = styled.div`
  display: flex;
  align-items: center;
  justify-content: flex-end;
  gap: 13px;
  width: 344px;
  flex: none;
  padding-right: 11px;
  border: 1px solid #bbb;
  background: #f2f2f2;
  color: #333;
  font-size: 14px;
`;

const StartButton = styled(Slot)`
  background: #2f3b55;
`;

const StartTip = styled.div`
  position: absolute;
  right: 10px;
  top: -20px;
  width: 28px;
  height: 20px;
  border: 1px solid #777;
  background: #fff;
  box-shadow: -2px 2px 2px #62686e;
  line-height: 18px;
  text-align: center;
`;

const Watermark = styled.div`
  position: absolute;
  left: 602px;
  top: 674px;
  width: 164px;
  pointer-events: none;
`;

const MarkLogo = styled.div`
  height: 52px;
  color: rgba(190, 192, 192, 0.45);
  font: bold 48px/50px "DejaVu Sans", sans-serif;
`;

const MarkUrl = styled.div`
  color: rgba(190, 196, 200, 0.42);
  font: bold 26px/24px "Open Sans", sans-serif;
`;
